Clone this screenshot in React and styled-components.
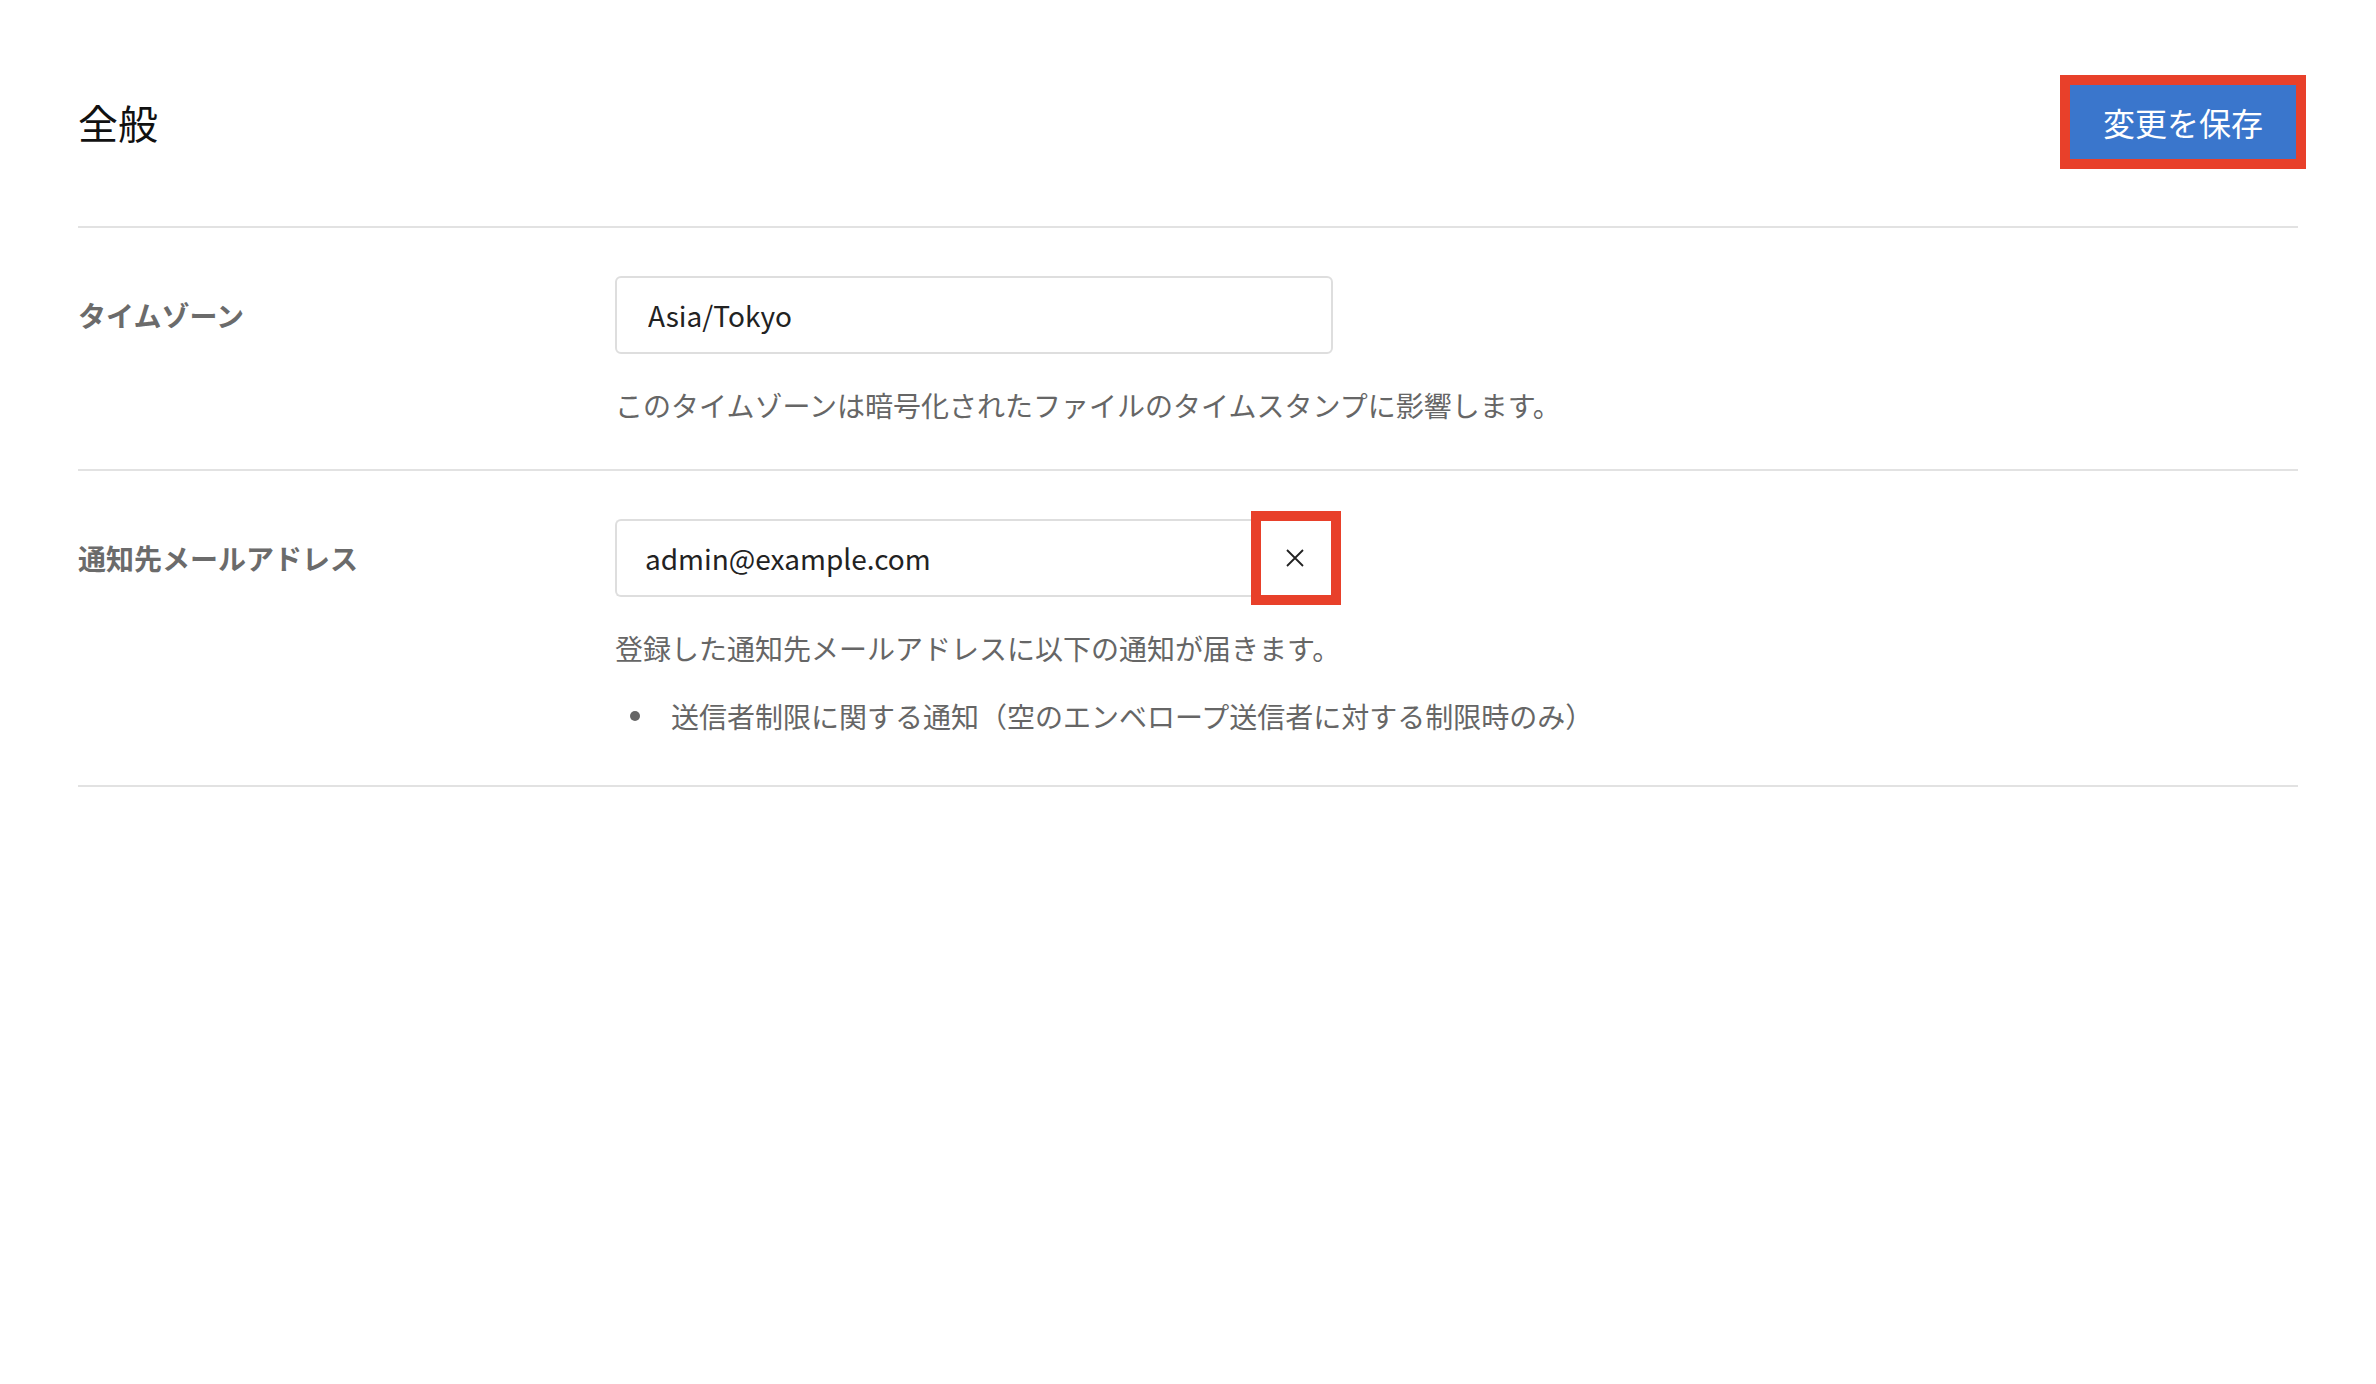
import React from "react";
import styled, { createGlobalStyle } from "styled-components";

const GlobalStyle = createGlobalStyle`
  html, body {
    margin: 0;
    padding: 0;
    background: #ffffff;
  }
  body {
    font-family: "Noto Sans CJK JP", "Noto Sans", sans-serif;
    color: #222;
  }
`;

const App = () => {
  return (
    <>
      <GlobalStyle />
      <Page>
        <Header>
          <Title>全般</Title>
          <SaveButton type="button">変更を保存</SaveButton>
        </Header>

        <Row>
          <Label>タイムゾーン</Label>
          <Field>
            <TextInput defaultValue="Asia/Tokyo" pad={31} readOnly />
            <Help>このタイムゾーンは暗号化されたファイルのタイムスタンプに影響します。</Help>
          </Field>
        </Row>

        <Row>
          <Label>通知先メールアドレス</Label>
          <Field>
            <InputGroup>
              <TextInput defaultValue="admin@example.com" pad={28} grouped readOnly />
              <ClearButton type="button" aria-label="クリア">
                <svg width="18" height="18" viewBox="0 0 18 18">
                  <path d="M1 1 L17 17 M17 1 L1 17" stroke="#222" strokeWidth="1.8" fill="none" />
                </svg>
              </ClearButton>
            </InputGroup>
            <Help>登録した通知先メールアドレスに以下の通知が届きます。</Help>
            <List>
              <Item>
                <Dot />
                送信者制限に関する通知（空のエンベロープ送信者に対する制限時のみ）
              </Item>
            </List>
          </Field>
        </Row>
      </Page>
    </>
  );
};

const Page = styled.div`
  padding: 0 78px;
`;

const Header = styled.header`
  display: flex;
  align-items: center;
  justify-content: space-between;
  padding: 83px 0 65px;
  border-bottom: 2px solid #e2e2e2;
`;

const Title = styled.h1`
  margin: 0;
  font-size: 40px;
  font-weight: 400;
  line-height: 1;
  color: #111;
`;

const SaveButton = styled.button`
  width: 230px;
  height: 78px;
  padding: 0;
  border: none;
  background: #3a76cc;
  color: #fff;
  font-family: inherit;
  font-size: 32px;
  font-weight: 400;
  cursor: pointer;
  outline: 10px solid #e8402a;
  outline-offset: -2px;
`;

const Row = styled.section`
  display: grid;
  grid-template-columns: 537px 1fr;
  padding: 48px 0 44px;
  border-bottom: 2px solid #e2e2e2;
`;

const Label = styled.div`
  height: 78px;
  display: flex;
  align-items: center;
  font-size: 28px;
  font-weight: 700;
  color: #6b6b6b;
`;

const Field = styled.div`
  display: flex;
  flex-direction: column;
  align-items: flex-start;
`;

const InputGroup = styled.div`
  display: flex;
  width: 718px;
  height: 78px;
`;

const TextInput = styled.input`
  box-sizing: border-box;
  width: ${p => (p.grouped ? "auto" : "718px")};
  flex: ${p => (p.grouped ? 1 : "none")};
  min-width: 0;
  height: 78px;
  padding: 0 ${p => p.pad}px;
  border: 2px solid #dedede;
  border-right: ${p => (p.grouped ? "none" : "2px solid #dedede")};
  border-radius: ${p => (p.grouped ? "6px 0 0 6px" : "6px")};
  background: #fff;
  font-family: "Noto Sans CJK JP", "Noto Sans", sans-serif;
  font-size: 28px;
  color: #222;
  outline: none;
`;

const ClearButton = styled.button`
  box-sizing: border-box;
  width: 74px;
  height: 78px;
  display: flex;
  align-items: center;
  justify-content: center;
  padding: 0;
  border: 2px solid #dedede;
  border-left: none;
  border-radius: 0;
  background: #fff;
  cursor: pointer;
  outline: 10px solid #e8402a;
  outline-offset: -2px;
`;

const Help = styled.p`
  margin: 31px 0 0;
  font-size: 28px;
  line-height: 40px;
  color: #666;
`;

const List = styled.ul`
  margin: 28px 0 5px;
  padding: 0;
  list-style: none;
`;

const Item = styled.li`
  display: flex;
  align-items: center;
  font-size: 28px;
  line-height: 40px;
  color: #666;
`;

const Dot = styled.span`
  width: 10px;
  height: 10px;
  margin: 0 31px 0 15px;
  border-radius: 50%;
  background: #666;
  flex: none;
`;

export default App;
